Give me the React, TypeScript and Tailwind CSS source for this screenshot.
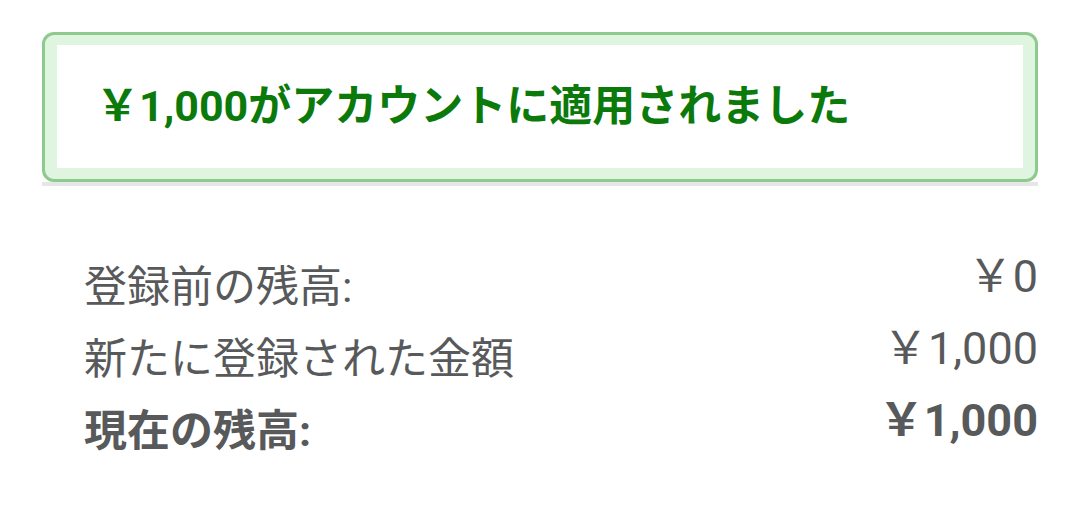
import React from "react";

const jp = { fontFamily: "Roboto, 'Noto Sans CJK JP', sans-serif" };

export default function App() {
  return (
    <div className="w-[1080px] h-[524px] bg-white overflow-hidden" style={jp}>
      <div className="pt-[32px] px-[42px]">
        <div className="border-b-[4px] border-[#e6e6e6]">
          <div className="rounded-[12px] border-[3px] border-[#8ec98e] bg-[#dff5df] pt-[10px] pb-[11px] px-[12px]">
            <div className="bg-white h-[123px] flex items-center pl-[39px]">
              <span className="text-[#0b7a0b] font-bold text-[43px] leading-none">
                ￥1,000がアカウントに適用されました
              </span>
            </div>
          </div>
        </div>
      </div>
      <div className="pl-[84px] pr-[42px] pt-[68px] text-[#58595b]">
        <div className="flex justify-between items-start h-[72px]">
          <span className="mt-[12px] leading-none text-[43px]">登録前の残高:</span>
          <span className="leading-none text-[45px]">￥0</span>
        </div>
        <div className="flex justify-between items-start h-[72px]">
          <span className="mt-[12px] leading-none text-[43px]">新たに登録された金額</span>
          <span className="leading-none text-[45px]">￥1,000</span>
        </div>
        <div className="flex justify-between items-start h-[72px] font-bold">
          <span className="mt-[12px] leading-none text-[43px]">現在の残高:</span>
          <span className="leading-none text-[45px]">￥1,000</span>
        </div>
      </div>
    </div>
  );
}
